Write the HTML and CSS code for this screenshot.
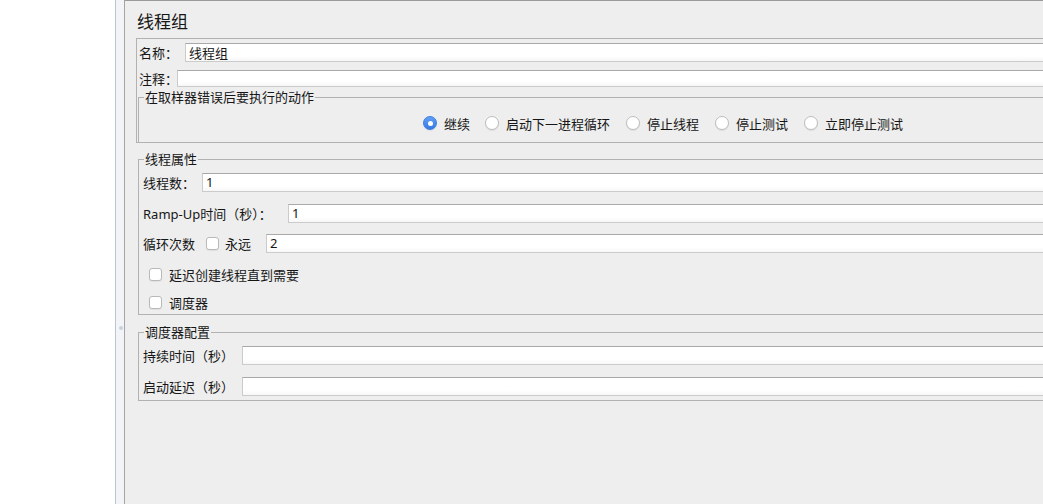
FILE: index.html
```html
<!DOCTYPE html>
<html lang="zh-CN">
<head>
    <meta charset="UTF-8">
    <meta name="viewport" content="width=device-width, initial-scale=1.0">
    <title>线程组</title>
    <link rel="stylesheet" href="styles.css">
</head>
<body>
    <div class="app">
        <div class="tree-panel"></div>
        <div class="splitter"><span class="grip"></span></div>

        <div class="editor">
            <h1 class="title">线程组</h1>

            <div class="name-panel">
                <div class="row name-row">
                    <label class="lbl name-lbl" for="name">名称：</label>
                    <input class="field" type="text" id="name" value="线程组">
                </div>
                <div class="row comment-row">
                    <label class="lbl comment-lbl" for="comment">注释：</label>
                    <input class="field" type="text" id="comment" value="">
                </div>

                <fieldset class="group action-group">
                    <legend>在取样器错误后要执行的动作</legend>
                    <div class="radios">
                        <span class="radio checked"><span class="circle"></span>继续</span>
                        <span class="radio"><span class="circle"></span>启动下一进程循环</span>
                        <span class="radio"><span class="circle"></span>停止线程</span>
                        <span class="radio"><span class="circle"></span>停止测试</span>
                        <span class="radio"><span class="circle"></span>立即停止测试</span>
                    </div>
                </fieldset>
            </div>

            <fieldset class="group thread-group">
                <legend>线程属性</legend>
                <div class="row">
                    <label class="lbl threads-lbl" for="threads">线程数：</label>
                    <input class="field" type="text" id="threads" value="1">
                </div>
                <div class="row ramp-row">
                    <label class="lbl ramp-lbl" for="ramp">Ramp-Up时间（秒）：</label>
                    <input class="field" type="text" id="ramp" value="1">
                </div>
                <div class="row loop-row">
                    <span class="lbl loop-lbl">循环次数</span>
                    <span class="check"></span>
                    <span class="lbl forever-lbl">永远</span>
                    <input class="field" type="text" id="loops" value="2">
                </div>
                <div class="row delay-row">
                    <span class="check"></span>
                    <span>延迟创建线程直到需要</span>
                </div>
                <div class="row sched-row">
                    <span class="check"></span>
                    <span>调度器</span>
                </div>
            </fieldset>

            <fieldset class="group scheduler-group">
                <legend>调度器配置</legend>
                <div class="row">
                    <label class="lbl dur-lbl" for="duration">持续时间（秒）</label>
                    <input class="field" type="text" id="duration" value="">
                </div>
                <div class="row startup-row">
                    <label class="lbl dur-lbl" for="delay">启动延迟（秒）</label>
                    <input class="field" type="text" id="delay" value="">
                </div>
            </fieldset>
        </div>
    </div>
</body>
</html>
```

FILE: styles.css
```css
:root {
    --panel-bg: #eeeeee;
    --line: #b2b2b2;
    --text: #161616;
    --accent: #3f86ee;
}

body {
    margin: 0;
    font-family: "Noto Sans", "Noto Sans CJK SC", sans-serif;
    font-size: 13px;
    color: var(--text);
    overflow: hidden;
}

.app {
    display: flex;
    height: 100vh;
}

/* left tree + splitter */
.tree-panel {
    width: 115px;
    flex-shrink: 0;
    background: #fff;
    border-right: 1px solid #b9c6d3;
}

.splitter {
    width: 9px;
    flex-shrink: 0;
    background: #f2f4f7;
    border-right: 1px solid #a4a4a4;
    display: flex;
    justify-content: center;
    padding-top: 326px;
    box-sizing: border-box;
}

.grip {
    width: 4px;
    height: 4px;
    margin-left: 1px;
    border-radius: 50%;
    background: #c9d1da;
}

/* editor area */
.editor {
    flex: 1;
    min-width: 0;
    background: var(--panel-bg);
    border-top: 1px solid #999;
    padding-left: 11px;
    overflow: hidden;
}

.title {
    margin: 0;
    font-size: 17px;
    font-weight: normal;
    line-height: 20px;
    padding: 11px 0 6px 1px;
}

.row {
    display: flex;
    align-items: center;
    height: 20px;
}

.lbl {
    flex-shrink: 0;
    white-space: nowrap;
}

.field {
    flex: 1;
    min-width: 0;
    height: 19px;
    box-sizing: border-box;
    margin: 0;
    padding: 0 3px;
    border: 1px solid #cbcbcb;
    border-top-color: #a9a9a9;
    border-radius: 0;
    background: linear-gradient(#fff 70%, #f7f7f7);
    font-family: inherit;
    font-size: 13px;
    color: var(--text);
    outline: none;
}

/* name / comment */
.name-panel {
    border: 1px solid var(--line);
    margin-right: -80px;
    padding-top: 4px;
}

.name-row {
    height: 19px;
    padding-left: 2px;
}

.name-lbl {
    width: 46px;
}

.comment-row {
    height: 17px;
    margin-top: 8px;
    padding-left: 2px;
}

.comment-row .field {
    height: 17px;
}

.comment-lbl {
    width: 38px;
}

/* titled groups */
.group {
    margin: 0;
    padding: 0 0 0 4px;
    border: 1px solid var(--line);
    min-width: 0;
}

.group legend {
    margin-left: 1px;
    padding: 0 1px;
    line-height: 16px;
    font-size: 13px;
}

.action-group {
    margin: 2px -1px 0 1px;
    padding: 8px 0 9px 0;
    border-bottom: none;
}

.action-group legend {
    margin-left: 5px;
}

.radios {
    display: flex;
    align-items: center;
    height: 20px;
    padding-left: 284px;
}

.radio {
    display: flex;
    align-items: center;
    margin-right: 16px;
    white-space: nowrap;
}

.radio:first-child {
    margin-right: 15px;
}

.circle {
    width: 14px;
    height: 14px;
    box-sizing: border-box;
    border-radius: 50%;
    border: 1px solid #bdbdbd;
    background: #fff;
    box-shadow: 0 1px 1px rgba(0, 0, 0, 0.07);
    margin-right: 7px;
    display: flex;
    align-items: center;
    justify-content: center;
}

.radio.checked .circle {
    border-color: #3a7ce0;
    background: linear-gradient(#62a0f6, #3479e4);
}

.radio.checked .circle::after {
    content: "";
    width: 5px;
    height: 5px;
    border-radius: 50%;
    background: #fff;
}

.check {
    width: 13px;
    height: 13px;
    box-sizing: border-box;
    flex-shrink: 0;
    border: 1px solid #b9b9b9;
    border-radius: 3px;
    background: #fff;
    box-shadow: 0 1px 1px rgba(0, 0, 0, 0.06);
}

/* thread properties */
.thread-group {
    margin: 8px -80px 0 2px;
    padding: 5px 0 2px 4px;
}

.thread-group legend {
    margin-left: 1px;
}

.threads-lbl {
    width: 59px;
}

.ramp-row {
    margin-top: 11px;
}

.ramp-lbl {
    width: 145px;
}

.loop-row {
    margin-top: 10px;
}

.loop-lbl {
    width: 63px;
}

.forever-lbl {
    width: 41px;
    margin-left: 6px;
}

.delay-row {
    margin-top: 11px;
    padding-left: 6px;
}

.sched-row {
    margin-top: 8px;
    padding-left: 6px;
}

.delay-row .check,
.sched-row .check {
    margin-right: 7px;
}

/* scheduler config */
.scheduler-group {
    margin: 9px -80px 0 2px;
    padding: 5px 0 4px 4px;
}

.dur-lbl {
    width: 99px;
}

.startup-row {
    margin-top: 11px;
}
```
